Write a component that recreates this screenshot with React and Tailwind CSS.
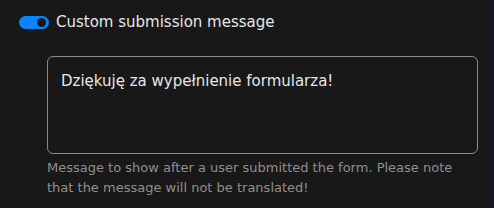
export default function App() {
  return (
    <div className="flex h-[208px] w-[494px] bg-[#181818]" style={{ fontFamily: '"DejaVu Sans", sans-serif' }}>
      <div className="flex-1 pl-[19px] pr-[15px] pt-[13px]">
        {/* toggle + label */}
        <label className="flex items-center gap-[7px]">
          <span className="relative inline-flex h-[13px] w-[30px] items-center rounded-full bg-[#0a84ff]">
            <span className="absolute right-[3px] h-[9px] w-[9px] rounded-full bg-[#181818]" />
          </span>
          <span className="text-[15px] leading-[18px] text-[#e6e6e6]">Custom submission message</span>
        </label>

        {/* message box */}
        <div className="ml-[28px] mt-[25px]">
          <div className="h-[98px] w-[431px] rounded-[6px] border border-[#8a8a8a] px-[13px] pt-[14px] text-[15px] leading-[20px] text-[#e6e6e6]">
            Dziękuję za wypełnienie formularza!
          </div>
          <p className="mt-[4px] text-[13px] leading-[20px] text-[#8f8f8f]">
            Message to show after a user submitted the form. Please note
            <br />
            that the message will not be translated!
          </p>
        </div>
      </div>
      <div className="w-[2px] bg-[#0b1a33]" />
    </div>
  );
}
